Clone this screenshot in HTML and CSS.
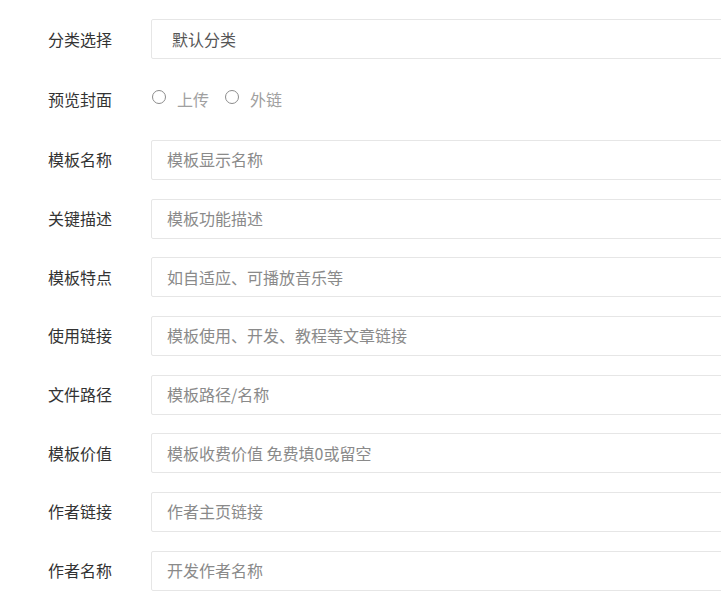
FILE: index.html
```html
<!DOCTYPE html>
<html lang="zh-CN">
  <head>
    <meta charset="UTF-8" />
    <meta name="viewport" content="width=device-width, initial-scale=1.0" />
    <title>模板信息</title>
    <link rel="stylesheet" href="styles.css">
  </head>
  <body>
    <form class="form" onsubmit="return false">
      <!-- 分类 -->
      <div class="form-item">
        <label class="form-label">分类选择</label>
        <div class="form-block">
          <input type="text" class="input select" value="默认分类" readonly />
        </div>
      </div>

      <!-- 封面来源 -->
      <div class="form-item radio-item">
        <label class="form-label">预览封面</label>
        <div class="form-block radios">
          <span class="radio"><i class="radio-dot"></i>上传</span>
          <span class="radio"><i class="radio-dot"></i>外链</span>
        </div>
      </div>

      <div class="form-item">
        <label class="form-label">模板名称</label>
        <div class="form-block"><input type="text" class="input" placeholder="模板显示名称" /></div>
      </div>
      <div class="form-item">
        <label class="form-label">关键描述</label>
        <div class="form-block"><input type="text" class="input" placeholder="模板功能描述" /></div>
      </div>
      <div class="form-item">
        <label class="form-label">模板特点</label>
        <div class="form-block"><input type="text" class="input" placeholder="如自适应、可播放音乐等" /></div>
      </div>
      <div class="form-item">
        <label class="form-label">使用链接</label>
        <div class="form-block"><input type="text" class="input" placeholder="模板使用、开发、教程等文章链接" /></div>
      </div>
      <div class="form-item">
        <label class="form-label">文件路径</label>
        <div class="form-block"><input type="text" class="input" placeholder="模板路径/名称" /></div>
      </div>
      <div class="form-item">
        <label class="form-label">模板价值</label>
        <div class="form-block"><input type="text" class="input" placeholder="模板收费价值 免费填0或留空" /></div>
      </div>
      <div class="form-item">
        <label class="form-label">作者链接</label>
        <div class="form-block"><input type="text" class="input" placeholder="作者主页链接" /></div>
      </div>
      <div class="form-item">
        <label class="form-label">作者名称</label>
        <div class="form-block"><input type="text" class="input" placeholder="开发作者名称" /></div>
      </div>
    </form>
  </body>
</html>
```

FILE: styles.css
```css
/* Page base */
html {
  overflow: hidden;
}

body {
  margin: 0;
  background-color: #fff;
  font-family: "Noto Sans CJK SC", "Microsoft YaHei", sans-serif;
  font-size: 16px;
  color: #333;
}

/* Form wraps wider than the window, inputs run off the right edge */
.form {
  width: 780px;
  padding-top: 19px;
}

.form-item {
  display: flex;
  align-items: center;
  height: 40px;
  margin-bottom: 18.67px;
}

.radio-item {
  height: 43.67px;
}

/* Labels on the left */
.form-label {
  width: 103px;
  padding-left: 48px;
  padding-bottom: 1px;
  line-height: 20px;
  color: #333;
}

.form-block {
  flex: 1;
}

/* Text inputs */
.input {
  display: block;
  width: 100%;
  height: 40px;
  padding: 0 15px 1px;
  font-family: inherit;
  font-size: 16px;
  color: #555;
  background-color: #fff;
  border: 1px solid #e6e6e6;
  border-radius: 2px;
  box-sizing: border-box;
  outline: none;
}

.input::placeholder {
  color: #8a8a8a;
}

.select {
  padding-left: 20px;
}

/* Radio group */
.radios {
  display: flex;
  align-items: center;
  padding-left: 1px;
}

.radio {
  display: inline-flex;
  align-items: center;
  margin-right: 16px;
  color: #a0a0a0;
  line-height: 20px;
}

.radio-dot {
  width: 12px;
  height: 12px;
  margin-right: 11px;
  margin-top: -4px;
  border: 1px solid #8c8c8c;
  border-radius: 50%;
}
```
